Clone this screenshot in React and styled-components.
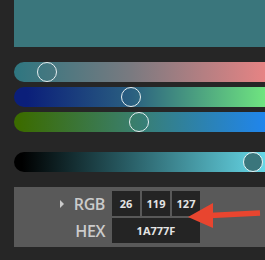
import React from "react";
import styled, { createGlobalStyle } from "styled-components";

const Global = createGlobalStyle`
  html, body {
    margin: 0;
    padding: 0;
    background: #262626;
    font-family: "Open Sans", "Liberation Sans", sans-serif;
  }
`;

const Page = styled.div`
  position: relative;
  width: 265px;
  height: 260px;
  overflow: hidden;
  padding-left: 14px;
  box-sizing: border-box;
`;

const Swatch = styled.div`
  height: 47px;
  margin-right: -10px;
  background: #3a767c;
`;

const Sliders = styled.div`
  display: flex;
  flex-direction: column;
  gap: 5px;
  margin-top: 15px;
  margin-right: -10px;
`;

const Track = styled.div`
  position: relative;
  height: 20px;
  border-radius: 10px 0 0 10px;
  background: ${(p) => p.$bg};
  margin-top: ${(p) => p.$top || 0}px;
`;

const Thumb = styled.div`
  position: absolute;
  top: 0;
  width: 20px;
  height: 20px;
  margin-left: -10px;
  box-sizing: border-box;
  border-radius: 50%;
  border: ${(p) => (p.$filled ? "1px solid #e8f4f6" : "1.5px solid #e6eef0")};
  background: ${(p) => (p.$filled ? "#3a767c" : "transparent")};
`;

const Panel = styled.div`
  margin-top: 15px;
  height: 60px;
  background: #595959;
  display: grid;
  grid-template-columns: 96px 28px 28px 28px;
  grid-template-rows: 25px 25px;
  column-gap: 2px;
  row-gap: 2px;
  align-content: center;
`;

const Label = styled.div`
  display: flex;
  align-items: center;
  justify-content: flex-end;
  gap: 10px;
  padding-right: 5px;
  color: #cbcbcb;
  font-size: 16px;
  font-weight: 600;
  letter-spacing: -0.4px;
`;

const Caret = styled.span`
  width: 0;
  height: 0;
  border-top: 4px solid transparent;
  border-bottom: 4px solid transparent;
  border-left: 4px solid #cbcbcb;
`;

const Field = styled.div`
  background: #242424;
  color: #e4e4e4;
  font-size: 11px;
  font-weight: 700;
  display: flex;
  align-items: center;
  justify-content: center;
  grid-column: ${(p) => p.$span || "auto"};
`;

const Arrow = styled.svg`
  position: absolute;
  left: 0;
  top: 0;
  pointer-events: none;
`;

const sliders = [
  { bg: "linear-gradient(to right, #2e7680, #7a7a80 45%, #ee8484)", at: 33 },
  { bg: "linear-gradient(to right, #0b1f7a 5%, #2a5f80 45%, #74ee80)", at: 117 },
  { bg: "linear-gradient(to right, #3b6b00 2%, #3a7e6a 45%, #1e86f6)", at: 125 },
];

export default function App() {
  return (
    <>
      <Global />
      <Page>
        <Swatch />
        <Sliders>
          {sliders.map((s, i) => (
            <Track key={i} $bg={s.bg}>
              <Thumb style={{ left: s.at }} />
            </Track>
          ))}
          <Track $top={15} $bg="linear-gradient(to right, #000 3%, #2a6068 45%, #6ae0f0)">
            <Thumb $filled style={{ left: 239 }} />
          </Track>
        </Sliders>
        <Panel>
          <Label>
            <Caret />
            RGB
          </Label>
          <Field>26</Field>
          <Field>119</Field>
          <Field>127</Field>
          <Label>HEX</Label>
          <Field $span="span 3">1A777F</Field>
        </Panel>
        <Arrow width="265" height="260" viewBox="0 0 265 260">
          <line x1="210" y1="215.5" x2="260" y2="213" stroke="#e8452f" strokeWidth="5.5" />
          <polygon points="188,217 213,203 213,228" fill="#e8452f" />
        </Arrow>
      </Page>
    </>
  );
}
